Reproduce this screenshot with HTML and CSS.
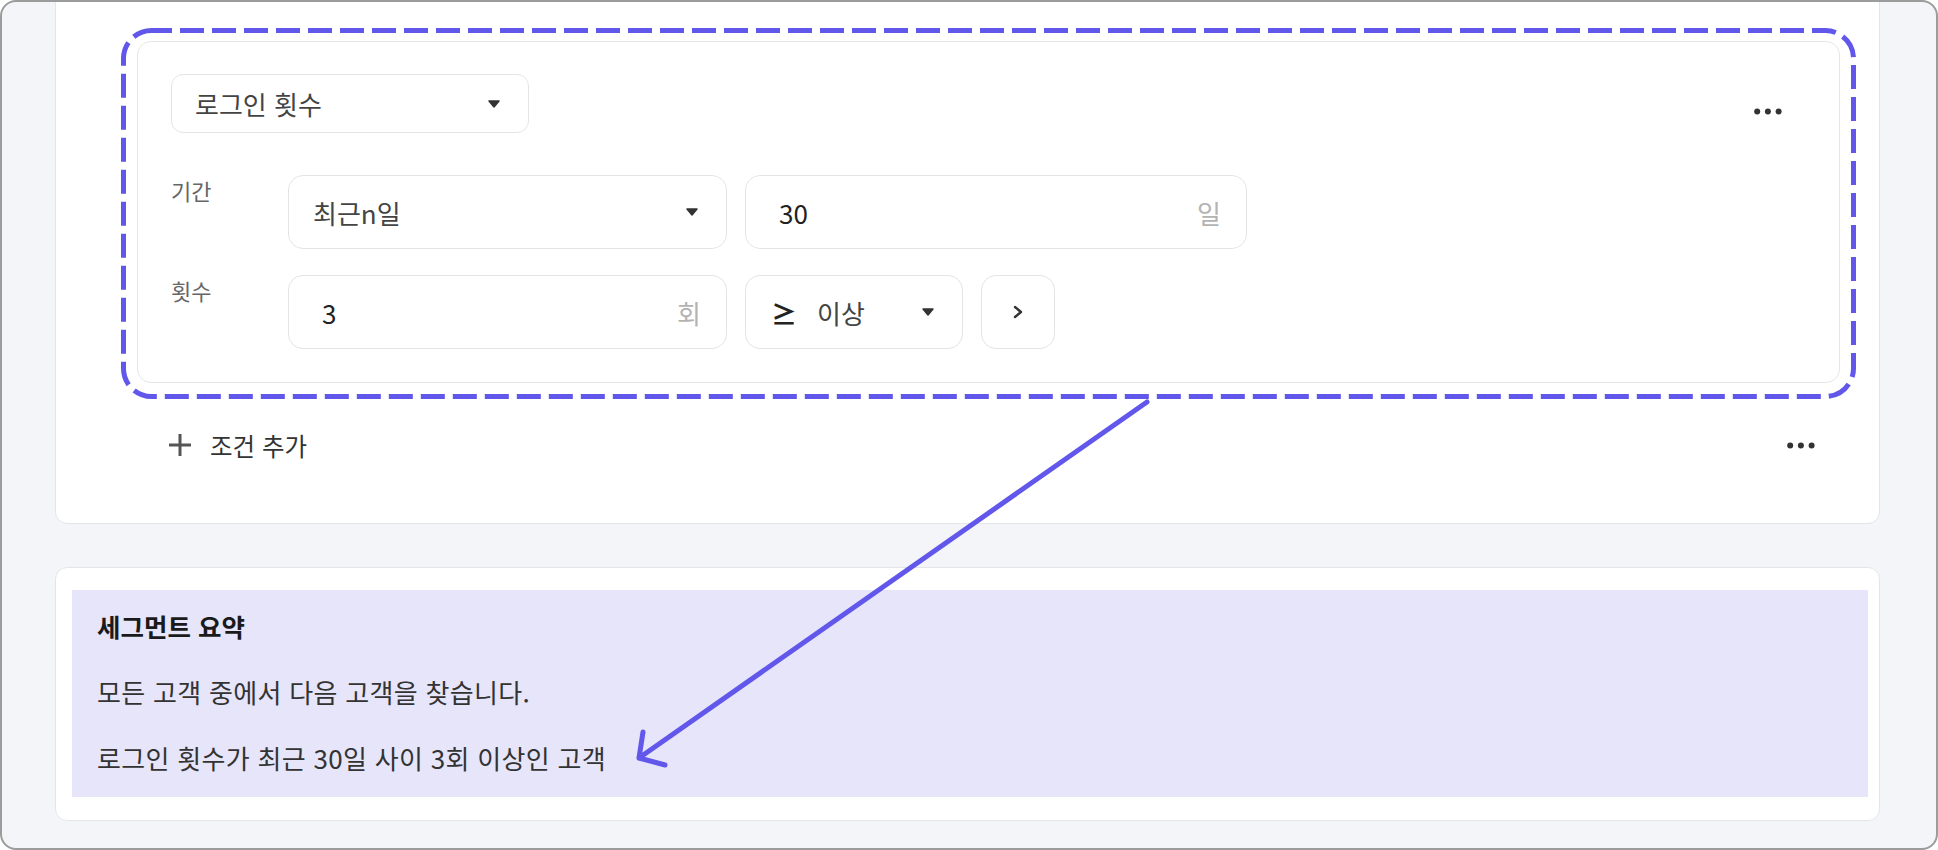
FILE: index.html
```html
<!DOCTYPE html>
<html lang="ko">
<head>
    <meta charset="UTF-8">
    <meta name="viewport" content="width=device-width, initial-scale=1.0">
    <title>세그먼트 조건</title>
    <link rel="stylesheet" href="styles.css">
</head>
<body>
    <div class="frame">
        <div class="rule-card">
            <div class="cond">
                <div class="cond-head">
                    <div class="select metric">
                        <span>로그인 횟수</span>
                        <svg class="caret" viewBox="0 0 12 8"><path d="M1 1 H11 L6 7 Z"/></svg>
                    </div>
                    <svg class="more" viewBox="0 0 28 7"><circle cx="3.2" cy="3.5" r="3"/><circle cx="13.9" cy="3.5" r="3"/><circle cx="24.6" cy="3.5" r="3"/></svg>
                </div>
                <div class="cond-row">
                    <div class="row-label">기간</div>
                    <div class="select wide">
                        <span>최근n일</span>
                        <svg class="caret" viewBox="0 0 12 8"><path d="M1 1 H11 L6 7 Z"/></svg>
                    </div>
                    <div class="field long">
                        <span class="val">30</span>
                        <span class="unit">일</span>
                    </div>
                </div>
                <div class="cond-row second">
                    <div class="row-label">횟수</div>
                    <div class="field wide">
                        <span class="val">3</span>
                        <span class="unit">회</span>
                    </div>
                    <div class="select op">
                        <span class="ge">≥</span>
                        <span>이상</span>
                        <svg class="caret" viewBox="0 0 12 8"><path d="M1 1 H11 L6 7 Z"/></svg>
                    </div>
                    <button class="next">
                        <svg viewBox="0 0 10 14"><path d="M2 2 L8 7 L2 12"/></svg>
                    </button>
                </div>
            </div>
            <div class="add-row">
                <button class="add-btn">
                    <svg viewBox="0 0 24 24"><path d="M12 1 V23 M1 12 H23"/></svg>
                    <span>조건 추가</span>
                </button>
                <svg class="more flat" viewBox="0 0 28 7"><circle cx="3.2" cy="3.5" r="3"/><circle cx="13.9" cy="3.5" r="3"/><circle cx="24.6" cy="3.5" r="3"/></svg>
            </div>
        </div>

        <div class="summary-card">
            <div class="summary">
                <h3>세그먼트 요약</h3>
                <p>모든 고객 중에서 다음 고객을 찾습니다.</p>
                <p>로그인 횟수가 최근 30일 사이 3회 이상인 고객</p>
            </div>
        </div>
    </div>

    <!-- highlight + arrow drawn over the page -->
    <svg class="annotation" width="1938" height="850" viewBox="0 0 1938 850">
        <rect class="hl" x="123.5" y="30.5" width="1730" height="366" rx="28"/>
        <path class="arrow" d="M1147 402 L639 758 M643 732 L639 758 L665 765"/>
    </svg>
</body>
</html>
```

FILE: styles.css
```css
* {
    box-sizing: border-box;
}
body {
    margin: 0;
    background-color: #fff;
    font-family: "Noto Sans CJK KR", "Noto Sans", sans-serif;
    color: #333;
}
.frame {
    width: 1938px;
    height: 850px;
    border: 2px solid #9c9c9c;
    border-radius: 16px;
    background-color: #f3f5f8;
    overflow: hidden;
    padding: 0 56px 0 53px;
}
.rule-card {
    margin-top: -30px;
    background-color: #fff;
    border: 1px solid #e3e5e9;
    border-radius: 12px;
    padding: 68px 39px 54px 81px;
}
.cond {
    border: 1px solid #e4e6ea;
    border-radius: 14px;
    padding: 32px 57px 33px 33px;
}
.cond-head {
    display: flex;
    justify-content: space-between;
    align-items: flex-start;
}
.select, .field {
    display: flex;
    align-items: center;
    justify-content: space-between;
    background-color: #fff;
    border: 1px solid #e2e4e8;
    border-radius: 15px;
    font-size: 26px;
    color: #444;
}
.caret {
    width: 12px;
    height: 8px;
    flex-shrink: 0;
}
.caret path {
    fill: #333;
    stroke: #333;
    stroke-width: 1.5;
    stroke-linejoin: round;
}
.metric {
    width: 358px;
    height: 59px;
    border-radius: 12px;
    padding: 0 28px 0 23px;
}
.more {
    display: block;
    width: 28px;
    height: 7px;
    margin-top: 34px;
    fill: #333;
}
.more.flat {
    margin-top: 0;
}
.cond-row {
    display: flex;
    gap: 18px;
    margin-top: 42px;
}
.cond-row.second {
    margin-top: 26px;
}
.row-label {
    width: 99px;
    font-size: 22px;
    line-height: 30px;
    color: #666;
}
.wide {
    width: 439px;
    height: 74px;
}
.select.wide {
    padding: 0 28px 0 24px;
}
.field {
    padding: 0 25px 0 33px;
}
.field .val {
    color: #222;
}
.unit {
    color: #b3b3b3;
}
.long {
    width: 502px;
    height: 74px;
}
.op {
    width: 218px;
    height: 74px;
    padding: 0 28px 0 25px;
    justify-content: flex-start;
}
.op .caret {
    margin-left: auto;
}
.ge {
    display: inline-block;
    width: 46px;
    font-weight: 700;
    color: #222;
}
.next {
    width: 74px;
    height: 74px;
    display: flex;
    align-items: center;
    justify-content: center;
    padding: 0;
    background-color: #fff;
    border: 1px solid #e2e4e8;
    border-radius: 15px;
    cursor: pointer;
}
.next svg {
    width: 10px;
    height: 14px;
    fill: none;
    stroke: #333;
    stroke-width: 2.4;
    stroke-linecap: round;
    stroke-linejoin: round;
}
.add-row {
    display: flex;
    justify-content: space-between;
    align-items: center;
    height: 48px;
    margin-top: 38px;
    padding: 0 25px 0 31px;
}
.add-btn {
    display: flex;
    align-items: center;
    gap: 18px;
    padding: 0;
    background: none;
    border: none;
    font-family: inherit;
    font-size: 24.5px;
    color: #333;
    cursor: pointer;
}
.add-btn svg {
    width: 24px;
    height: 24px;
    fill: none;
    stroke: #555;
    stroke-width: 3;
}
.summary-card {
    margin-top: 43px;
    background-color: #fff;
    border: 1px solid #e3e5e9;
    border-radius: 12px;
    padding: 22px 11px 23px 16px;
}
.summary {
    background-color: #e6e5fa;
    padding: 18px 25px 21px;
}
.summary h3 {
    margin: 0;
    font-size: 25.5px;
    line-height: 36px;
    font-weight: 700;
    color: #1a1a1a;
}
.summary p {
    margin: 30px 0 0;
    font-size: 26px;
    letter-spacing: 0.3px;
    line-height: 36px;
    color: #333;
}
.annotation {
    position: absolute;
    top: 0;
    left: 0;
    pointer-events: none;
    fill: none;
    stroke: #6157eb;
    stroke-width: 5;
}
.hl {
    stroke-dasharray: 24 8;
    stroke-dashoffset: 3.5;
}
.arrow {
    stroke-linecap: round;
    stroke-linejoin: round;
}
```
